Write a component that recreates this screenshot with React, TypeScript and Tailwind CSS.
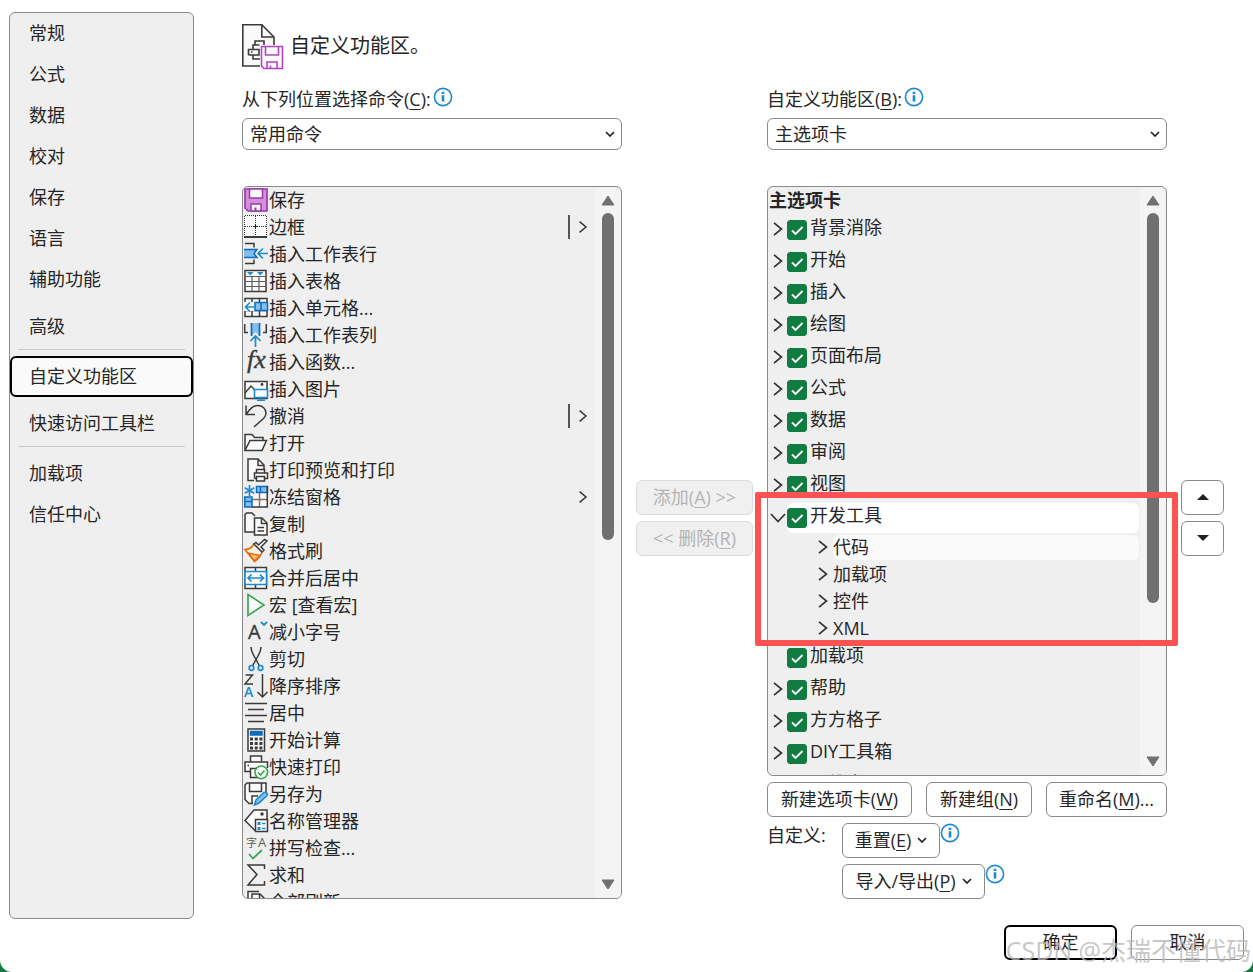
import { useState, type ReactNode } from "react";

const categories = [
  { name: "常规", className: "" },
  { name: "公式", className: "" },
  { name: "数据", className: "" },
  { name: "校对", className: "" },
  { name: "保存", className: "" },
  { name: "语言", className: "" },
  { name: "辅助功能", className: "" },
  { name: "高级", className: "mt-1.5", divider: true },
  { name: "自定义功能区", className: "" },
  { name: "快速访问工具栏", className: "mt-1.5", divider: true },
  { name: "加载项", className: "" },
  { name: "信任中心", className: "" },
];

const ink = "#3b3a39";
const blue = "#1e8bcd";
const paleBlue = "#83beec";
const deepBlue = "#0f6cbd";
const green = "#3fa556";
const purple = "#9b3aab";

const commands: { name: string; more?: "split" | "menu"; icon: ReactNode }[] = [
  {
    name: "保存",
    icon: (
      <>
        <path d="M1 1h22v22H4l-3-3z" fill="#d48fdc" stroke={purple} strokeWidth="1.700" />
        <path d="M5.500 1h13v9h-13zM7 23v-7h10v7z" fill="#fafafa" stroke={purple} strokeWidth="1.500" />
        <path d="M11.500 19.500v3.500" stroke={purple} strokeWidth="2" />
      </>
    ),
  },
  {
    name: "边框",
    more: "split",
    icon: (
      <>
        <path d="M0 0h23v22H0z" fill="#fafafa" stroke="none" />
        <path d="M1 .5h22M1 11.500h22M.5 1v20M11.500 1v20M22.500 1v20" strokeDasharray="1 1" strokeWidth="1" stroke="#333" />
        <path d="M11.500 9.500v4M9.500 11.500h4" strokeWidth="1" stroke="#222" />
        <path d="M0 22h23" stroke="#000" strokeWidth="1.500" />
      </>
    ),
  },
  {
    name: "插入工作表行",
    icon: (
      <>
        <path d="M1 1.500h9v4M1 21.500h9v-4" />
        <path d="M0 7.500h13l-3 4 3 4H0z" fill={paleBlue} stroke="none" />
        <path d="M0 7.500h13l-3 4 3 4H0" stroke={deepBlue} />
        <path d="M24 11.500H14M19 6.500l-5 5 5 5" stroke={blue} strokeWidth="1.700" />
      </>
    ),
  },
  {
    name: "插入表格",
    icon: (
      <>
        <path d="M1 1.500h21v21H1z" fill="#fafafa" />
        <path d="M1 7.500h21M1 12.500h21M1 17.500h21M8 7.500v15M15 7.500v15" stroke="#605e5c" strokeWidth="1.200" />
        <path d="M3 3h6.500L6.200 6.500zM13 3h6.500l-3.300 3.500z" fill={blue} stroke="none" />
      </>
    ),
  },
  {
    name: "插入单元格...",
    icon: (
      <>
        <path d="M1 2.500h22v18H1z" fill="#fafafa" />
        <path d="M8 2.500v18M15.500 2.500v18M1 14.500h22" />
        <path d="M0 6h12v9H0z" fill="#fafafa" stroke="none" />
        <path d="M11 6.500h12.500v8H11z" fill={paleBlue} stroke={deepBlue} strokeWidth="1.500" />
        <path d="M17 6.500v8" stroke={deepBlue} />
        <path d="M12 11H1.500M6 6.500L1.500 11 6 15.500" stroke={blue} strokeWidth="1.700" />
      </>
    ),
  },
  {
    name: "插入工作表列",
    icon: (
      <>
        <path d="M.7 1v8.500H4M22.300 1v8.500H19" />
        <path d="M7.500 0h8v13l-4-4-4 4z" fill={paleBlue} stroke="none" />
        <path d="M7.500 0v13M15.500 0v13" stroke={deepBlue} strokeWidth="1.700" />
        <path d="M11.500 24V13.500M6.500 18l5-5 5 5" stroke={blue} strokeWidth="1.700" />
      </>
    ),
  },
  {
    name: "插入函数...",
    icon: (
      <text x="3" y="18" fontSize="26" fontStyle="italic" fontFamily="Liberation Serif, serif" fill={ink} stroke={ink} strokeWidth=".4">
        fx
      </text>
    ),
  },
  {
    name: "插入图片",
    icon: (
      <>
        <path d="M1 4.500h22v17H1z" fill="#fafafa" />
        <path d="M1 16l6-7 5 5" />
        <circle cx="18" cy="7.500" r="1.400" fill={ink} stroke="none" />
        <path d="M10.500 12.500h13v8h-13z" fill="#fafafa" stroke={blue} strokeWidth="1.600" />
        <path d="M17 20.500v3M13 23.300h8" stroke={blue} strokeWidth="1.600" />
      </>
    ),
  },
  {
    name: "撤消",
    more: "split",
    icon: <path d="M2 1.500v9h9M2 10.500C6 5 9 1.500 14 1.500c4.500 0 8 3.500 8 7.500 0 2.500-1 4-2.500 5.500L10 23" />,
  },
  {
    name: "打开",
    icon: (
      <>
        <path d="M1 19V3.500h7l2.500 3H19v3" fill="#fafafa" />
        <path d="M1 19.500l5-10h16.500l-4.500 10z" fill="#fafafa" />
      </>
    ),
  },
  {
    name: "打印预览和打印",
    icon: (
      <>
        <path d="M10 22.500H4V1h10l6 6v4" fill="#fafafa" />
        <path d="M14 1v6.500h6" />
        <path d="M12.500 15v-3.500h8V15M10.500 20.500V15h13v5.500h-3M12.500 20.500h-2" fill="#fafafa" />
        <path d="M12.500 18.500h8V23h-8z" fill="#fafafa" />
      </>
    ),
  },
  {
    name: "冻结窗格",
    more: "menu",
    icon: (
      <>
        <path d="M8 7.500h15.500V22H8z" fill="#fafafa" stroke="none" />
        <path d="M8 14.500h15.500M15.500 7.500V22" stroke="#8a6f66" />
        <path d="M12.500 1.500h11v6h-11zM.7 12H8v10H.7z" fill={paleBlue} stroke={deepBlue} />
        <path d="M16.500 1.500v6M.7 16.500H8" stroke={deepBlue} />
        <path d="M23.300 1v21H8" />
        <path d="M5.500 0v11M.7 2.800l9.600 5.500M.7 8.300l9.600-5.500" stroke={blue} strokeWidth="1.700" />
      </>
    ),
  },
  {
    name: "复制",
    icon: (
      <>
        <path d="M10 20H1V2.500L2.500 1H8l3 3" fill="#fafafa" />
        <path d="M10.500 6H18l5 5v12H10.500z" fill="#fafafa" />
        <path d="M17.500 6v5.500H23M13.500 15.500h6.500M13.500 19h6.500" />
      </>
    ),
  },
  {
    name: "格式刷",
    icon: (
      <>
        <path d="M1 10.500c4 0 7-2 9-5.500l8 8c-1.500 4-4 7.500-7.500 9.500z" fill="#fdf3ea" stroke="#e06c10" strokeWidth="1.600" />
        <path d="M4 14l12 2.500L10.500 22z" fill="#fcc16b" stroke="#e06c10" />
        <path d="M10 5l8 8 2-2-3-3 6-6-2.500-1.500-6 5.500L12 3.500z" fill="#fafafa" />
      </>
    ),
  },
  {
    name: "合并后居中",
    icon: (
      <>
        <path d="M1 1.500h21.500v21H1zM11.500 1.500v4M11.500 18.500v4" fill="#fafafa" />
        <path d="M1 5.500h21.500v13H1z" fill="#fafafa" stroke={blue} strokeWidth="1.600" />
        <path d="M4 12h15.500M7.500 8.500L4 12l3.500 3.500M16 8.500l3.500 3.500-3.500 3.500" stroke={blue} strokeWidth="1.700" />
      </>
    ),
  },
  {
    name: "宏 [查看宏]",
    icon: <path d="M4 1.500L20 12 4 22.500z" fill="#fafafa" stroke={green} strokeWidth="1.700" />,
  },
  {
    name: "减小字号",
    icon: (
      <>
        <path d="M17 2l3 3 3-3" stroke={blue} strokeWidth="1.800" />
        <text x="4" y="19" fontSize="20" fontFamily="Open Sans, sans-serif" fill={ink} stroke={ink} strokeWidth=".3">
          A
        </text>
      </>
    ),
  },
  {
    name: "剪切",
    icon: (
      <>
        <path d="M7 0c0 4 1 5.500 3 9l5.500 10M17 0c0 4-1 5.500-3 9L8.500 19" />
        <circle cx="7.500" cy="21" r="2.300" stroke={blue} strokeWidth="1.700" />
        <circle cx="16.500" cy="21" r="2.300" stroke={blue} strokeWidth="1.700" />
      </>
    ),
  },
  {
    name: "降序排序",
    icon: (
      <>
        <path d="M1.500 1h7L1 10h8" />
        <text x="0" y="23" fontSize="14" fontWeight="600" fontFamily="Open Sans, sans-serif" fill={blue} stroke="none">
          A
        </text>
        <path d="M18.500 0v23M13.500 18l5 5 5-5" />
      </>
    ),
  },
  { name: "居中", icon: <path d="M1 2.500h22M4 8.500h16M1 14.500h22M4 20.500h16" /> },
  {
    name: "开始计算",
    icon: (
      <>
        <path d="M4 1h16.500v22H4z" fill="#fafafa" />
        <path d="M6.500 3.500h11.500V7H6.500z" fill={deepBlue} stroke={deepBlue} />
        <path d="M6 11h13M6 15.500h13M6 20h13" strokeWidth="3" strokeDasharray="3 1.700" />
      </>
    ),
  },
  {
    name: "快速打印",
    icon: (
      <>
        <path d="M6.500 7V1h11v6M10 18.500H6M6 16.500H1V7h22.500v6" fill="#fafafa" />
        <path d="M6.500 22.500v-9h8v9z" fill="#fafafa" />
        <path d="M3.500 10.500H5" />
        <circle cx="17.300" cy="17.300" r="6.300" fill="#fafafa" stroke={green} strokeWidth="1.600" />
        <path d="M14 17.500l2.500 2.500 4-4.500" stroke={green} strokeWidth="1.600" />
      </>
    ),
  },
  {
    name: "另存为",
    icon: (
      <>
        <path d="M9 21.500H5l-4-4V3l2-2h19v9" fill="#fafafa" />
        <path d="M5.500 1v8.500h12V1M8 21.500V14h6" />
        <path d="M10.500 23l1.500-5 8-7.500c2-1 4 1 3 3l-8 7.500z" fill={paleBlue} stroke={blue} strokeWidth="1.600" />
      </>
    ),
  },
  {
    name: "名称管理器",
    icon: (
      <>
        <path d="M11 21.500L1 11.500 10 1h13v9" fill="#fafafa" />
        <circle cx="18" cy="5" r="1" fill={ink} />
        <path d="M11.500 10.500h12v12h-12z" fill="#fafafa" />
        <path d="M13.500 13h3v3h-3zM13.500 18h3v3h-3z" fill={blue} stroke="none" />
        <path d="M18 14.500h3.500M18 19.500h3.500" stroke={blue} />
      </>
    ),
  },
  {
    name: "拼写检查...",
    icon: (
      <>
        <text x="2" y="11" fontSize="11" fontFamily="Noto Sans CJK SC, sans-serif" fill="#605e5c" stroke="none">
          字
        </text>
        <text x="14" y="11" fontSize="13" fontFamily="Open Sans, sans-serif" fill="#605e5c" stroke="none">
          A
        </text>
        <path d="M5 18l4 4.500 9-8.500" stroke={green} strokeWidth="1.800" />
      </>
    ),
  },
  { name: "求和", icon: <path d="M20.500 6V2H4l9 9.500L4 22h16.500v-4" /> },
  {
    name: "全部刷新",
    icon: (
      <>
        <path d="M8 20H4V1.500h11" fill="#fafafa" />
        <path d="M8 4h8l5 5v14H8z" fill="#fafafa" />
        <path d="M15.500 4v5.500H21" />
      </>
    ),
  },
];

type Tab = { name: string; leaf?: boolean; children?: string[] };

const tabs: Tab[] = [
  { name: "背景消除" },
  { name: "开始" },
  { name: "插入" },
  { name: "绘图" },
  { name: "页面布局" },
  { name: "公式" },
  { name: "数据" },
  { name: "审阅" },
  { name: "视图" },
  { name: "开发工具", children: ["代码", "加载项", "控件", "XML"] },
  { name: "加载项", leaf: true },
  { name: "帮助" },
  { name: "方方格子" },
  { name: "DIY工具箱" },
  { name: "一维表" },
];

const buttonBase = "h-[35px] shrink-0 rounded-md border border-[#8a8a8a] bg-white pb-0.5 whitespace-nowrap";
const disabledButton =
  "h-[35px] rounded-md border border-[#dcdcdc] bg-[#f0f0f0] pb-0.5 whitespace-nowrap text-[#b4b4b4]";

function Key({ children }: { children: string }) {
  return <span className="underline decoration-1 underline-offset-3">{children}</span>;
}

function InfoIcon() {
  return (
    <svg viewBox="0 0 20 20" className="size-5 shrink-0" fill="none" aria-hidden="true">
      <circle cx="10" cy="10" r="8.600" fill="#fafafa" stroke={blue} strokeWidth="1.600" />
      <path d="M10 4.800V7M10 8.300v6.200" stroke={blue} strokeWidth="2.600" />
    </svg>
  );
}

function CaretDown() {
  return (
    <svg viewBox="0 0 10 6" className="h-1.5 w-2.5" fill="none" aria-hidden="true">
      <path d="M1 1l4 4 4-4" stroke="#222" strokeWidth="1.700" />
    </svg>
  );
}

function ChevronRight({ className }: { className: string }) {
  return (
    <svg viewBox="0 0 10 14" className={className} fill="none" aria-hidden="true">
      <path d="M1 .8L8.500 7 1 13.200" stroke="#333" strokeWidth="1.700" />
    </svg>
  );
}

function Select({ id, value }: { id: string; value: string }) {
  return (
    <div className="grid items-center">
      <select
        id={id}
        className="col-start-1 row-start-1 h-8 w-full appearance-none rounded-md border border-[#8a8a8a] bg-white px-[7px] leading-6"
      >
        <option>{value}</option>
      </select>
      <span className="pointer-events-none col-start-1 row-start-1 mr-[7px] justify-self-end">
        <CaretDown />
      </span>
    </div>
  );
}

function Scrollbar({ thumb }: { thumb: string }) {
  return (
    <div className="flex w-[26px] shrink-0 flex-col items-center rounded-t-lg bg-[#f4f4f4] py-2" aria-hidden="true">
      <svg viewBox="0 0 14 11" className="h-[11px] w-3.5 shrink-0">
        <path d="M7 1l6 9H1z" fill="#707070" stroke="#707070" strokeLinejoin="round" />
      </svg>
      <div className="mt-[7px] w-3 flex-1">
        <div className={`w-3 rounded-full bg-[#707070] ${thumb}`} />
      </div>
      <svg viewBox="0 0 14 11" className="h-[11px] w-3.5 shrink-0">
        <path d="M7 10L1 1h12z" fill="#707070" stroke="#707070" strokeLinejoin="round" />
      </svg>
    </div>
  );
}

function TabRow({ tab }: { tab: Tab }) {
  const open = Boolean(tab.children);
  const [checked, setChecked] = useState(true);
  return (
    <li>
      <div className="flex h-8 items-start">
        <span className="flex w-[19px] shrink-0 justify-center pt-2">
          {!tab.leaf && (
            <button type="button" aria-label={tab.name} aria-expanded={open}>
              {open ? (
                <svg viewBox="0 0 16 14" className="h-3.5 w-4" fill="none" aria-hidden="true">
                  <path d="M1 4l7 7.500L15 4" stroke="#333" strokeWidth="1.700" />
                </svg>
              ) : (
                <ChevronRight className="h-3.5 w-2.5" />
              )}
            </button>
          )}
        </span>
        <label className={`mt-px flex h-[30px] flex-1 items-start gap-[3px] rounded-md ${open ? "bg-white" : ""}`}>
          <span className="mt-[5px] grid">
            <input
              type="checkbox"
              checked={checked}
              onChange={(e) => setChecked(e.target.checked)}
              className="col-start-1 row-start-1 size-5 appearance-none rounded-[3px] border border-[#107c41] bg-white checked:bg-[#107c41]"
            />
            <svg viewBox="0 0 20 20" className="pointer-events-none col-start-1 row-start-1 size-5" fill="none">
              <path d="M5 10.500l3.500 3.500L15.500 7" stroke="#fff" strokeWidth="1.800" />
            </svg>
          </span>
          <span className="leading-6">{tab.name}</span>
        </label>
      </div>
      {tab.children && (
        <ul>
          {tab.children.map((child, i) => (
            <li key={child} className="flex h-[27px] items-start pl-[50px]">
              <button type="button" aria-label={child} className="mt-1.5 mr-[5px]">
                <ChevronRight className="h-3.5 w-2.5" />
              </button>
              <span className={`mt-px h-[25px] flex-1 rounded-md leading-6 ${i === 0 ? "bg-[#fafafa]" : ""}`}>
                {child}
              </span>
            </li>
          ))}
        </ul>
      )}
    </li>
  );
}

function Sidebar() {
  return (
    <nav className="w-[185px] shrink-0 rounded-md border border-[#8a8a8a] bg-[#efefef]">
      {categories.map((item) => {
        const active = item.name === "自定义功能区";
        return (
          <div key={item.name} className={item.className}>
            <button
              type="button"
              className={`flex h-[41px] w-full items-center rounded-md border-2 pb-0.5 pl-[17px] text-left ${
                active ? "border-black bg-[#fafafa]" : "border-transparent"
              }`}
            >
              {item.name}
            </button>
            {item.divider && <div className="mx-2 mt-0.5 mb-1.5 h-px bg-[#c8c8c8]" />}
          </div>
        );
      })}
    </nav>
  );
}

function CommandList() {
  return (
    <div className="mt-9 flex min-h-0 flex-1 basis-0 overflow-hidden rounded-md border border-[#8a8a8a] bg-[#efefef]">
      <ul className="min-w-0 flex-1">
        {commands.map((command) => (
          <li key={command.name}>
            <button type="button" className="flex h-[27px] w-full items-start pl-px text-left">
              <svg
                viewBox="0 0 24 24"
                className="mt-px mr-px size-6 shrink-0 overflow-visible"
                fill="none"
                stroke={ink}
                strokeWidth="1.500"
                aria-hidden="true"
              >
                {command.icon}
              </svg>
              <span className="flex-1 leading-[26px]">{command.name}</span>
              {command.more && (
                <span
                  className={`mt-px mr-[7px] flex h-6 items-center pl-2 ${
                    command.more === "split" ? "border-l-2 border-[#555]" : ""
                  }`}
                >
                  <ChevronRight className="h-3 w-2.5" />
                </span>
              )}
            </button>
          </li>
        ))}
      </ul>
      <Scrollbar thumb="h-[327px]" />
    </div>
  );
}

function RibbonTree() {
  return (
    <div className="relative mt-9 flex min-h-0 flex-1 basis-0">
      <div className="flex min-w-0 flex-1 overflow-hidden rounded-md border border-[#8a8a8a] bg-[#efefef]">
        <div className="min-w-0 flex-1">
          <h2 className="pb-px pl-px leading-[26px] font-bold">主选项卡</h2>
          <ul className="pr-px">
            {tabs.map((tab, i) => (
              <TabRow key={i} tab={tab} />
            ))}
          </ul>
        </div>
        <Scrollbar thumb="h-[390px]" />
      </div>
      {/* Red marker around the developer tab */}
      <div className="pointer-events-none absolute top-[306px] -right-[11px] -left-3 h-[154px] rounded-xs border-6 border-[#fc5251]" />
    </div>
  );
}

export default function App() {
  return (
    <div className="bg-[#107c41]">
      <div className="relative flex h-screen min-h-[800px] flex-col rounded-b-xl bg-white font-['Open_Sans','Noto_Sans_CJK_SC',sans-serif] text-lg leading-6 text-[#262626]">
        <div className="flex min-h-0 flex-1 gap-12 pt-3 pr-[29px] pl-[9px]">
          <Sidebar />

          <main className="flex min-w-0 flex-1 flex-col pb-5">
            <header className="flex items-center gap-1.5 pt-3">
              <svg viewBox="0 0 42 46" className="h-[46px] w-[42px]" fill="none" stroke={ink} strokeWidth="1.600" aria-hidden="true">
                <path d="M.8.800h19L32 13v29H.8z" fill="#fafafa" />
                <path d="M19.800.800V13H32" />
                <path d="M13 21v-4h9v4M17.500 21H11v5M11 31v4h7M6.500 31V25.500H17V31H6.500M22 21v-4" />
                <path d="M9 28h1.500" />
                <path d="M18 21H42V46H18z" fill="#fff" stroke="none" />
                <path d="M19.500 22.500h21v22H22L19.500 42z" fill="#fafafa" stroke="#b146c2" />
                <path d="M23.500 22.500v8.500h13v-8.500M25 44.500V38h10v6.500M28.500 41.500v3" stroke="#b146c2" />
              </svg>
              <h1 className="pb-0.5 text-xl leading-7">自定义功能区。</h1>
            </header>

            <div className="mt-4 grid min-h-0 flex-1 grid-cols-[380fr_117px_400fr_43px] gap-[14px]">
              <section className="flex min-w-0 flex-col">
                <label htmlFor="commands-from" className="mb-1 flex h-7 items-start gap-0.5 pt-px">
                  <span>
                    从下列位置选择命令(<Key>C</Key>):
                  </span>
                  <InfoIcon />
                </label>
                <Select id="commands-from" value="常用命令" />
                <CommandList />
              </section>

              <div className="flex flex-col justify-center gap-1.5 pt-[51px]">
                <button type="button" disabled className={disabledButton}>
                  添加(<Key>A</Key>) &gt;&gt;
                </button>
                <button type="button" disabled className={disabledButton}>
                  &lt;&lt; 删除(<Key>R</Key>)
                </button>
              </div>

              <section className="flex min-w-0 flex-col">
                <label htmlFor="ribbon-scope" className="mb-1 flex h-7 items-start gap-0.5 pt-px">
                  <span>
                    自定义功能区(<Key>B</Key>):
                  </span>
                  <InfoIcon />
                </label>
                <Select id="ribbon-scope" value="主选项卡" />
                <RibbonTree />
                <div className="mt-1.5 flex justify-between">
                  <button type="button" className={`w-[145px] ${buttonBase}`}>
                    新建选项卡(<Key>W</Key>)
                  </button>
                  <button type="button" className={`w-[106px] ${buttonBase}`}>
                    新建组(<Key>N</Key>)
                  </button>
                  <button type="button" className={`w-[121px] ${buttonBase}`}>
                    重命名(<Key>M</Key>)...
                  </button>
                </div>
                <div className="mt-1.5 flex items-start">
                  <span className="w-[75px] shrink-0">自定义:</span>
                  <div className="flex flex-col gap-1.5">
                    <div className="flex items-start">
                      <button type="button" className={`flex w-[98px] items-center justify-center gap-1.5 ${buttonBase}`}>
                        <span>
                          重置(<Key>E</Key>)
                        </span>
                        <CaretDown />
                      </button>
                      <InfoIcon />
                    </div>
                    <div className="flex items-start">
                      <button type="button" className={`flex w-[143px] items-center justify-center gap-1.5 ${buttonBase}`}>
                        <span>
                          导入/导出(<Key>P</Key>)
                        </span>
                        <CaretDown />
                      </button>
                      <InfoIcon />
                    </div>
                  </div>
                </div>
              </section>

              <div className="flex flex-col justify-center gap-1.5 pt-[51px]">
                <button type="button" aria-label="上移" className={`flex items-center justify-center ${buttonBase}`}>
                  <svg viewBox="0 0 12 6" className="h-1.5 w-3">
                    <path d="M6 0l6 6H0z" fill="#222" />
                  </svg>
                </button>
                <button type="button" aria-label="下移" className={`flex items-center justify-center ${buttonBase}`}>
                  <svg viewBox="0 0 12 6" className="h-1.5 w-3">
                    <path d="M6 6L0 0h12z" fill="#222" />
                  </svg>
                </button>
              </div>
            </div>
          </main>
        </div>

        <footer className="flex justify-end gap-[14px] pt-1.5 pr-[9px] pb-3">
          <button type="button" className="h-[35px] w-[113px] rounded-md border-2 border-black bg-white pb-0.5">
            确定
          </button>
          <button type="button" className={`w-[113px] ${buttonBase}`}>
            取消
          </button>
        </footer>
        <p className="pointer-events-none absolute right-0.5 bottom-1.5 text-[25px] leading-8 whitespace-nowrap text-[#b8b8b8]/80">
          CSDN @杰瑞不懂代码
        </p>
      </div>
    </div>
  );
}
